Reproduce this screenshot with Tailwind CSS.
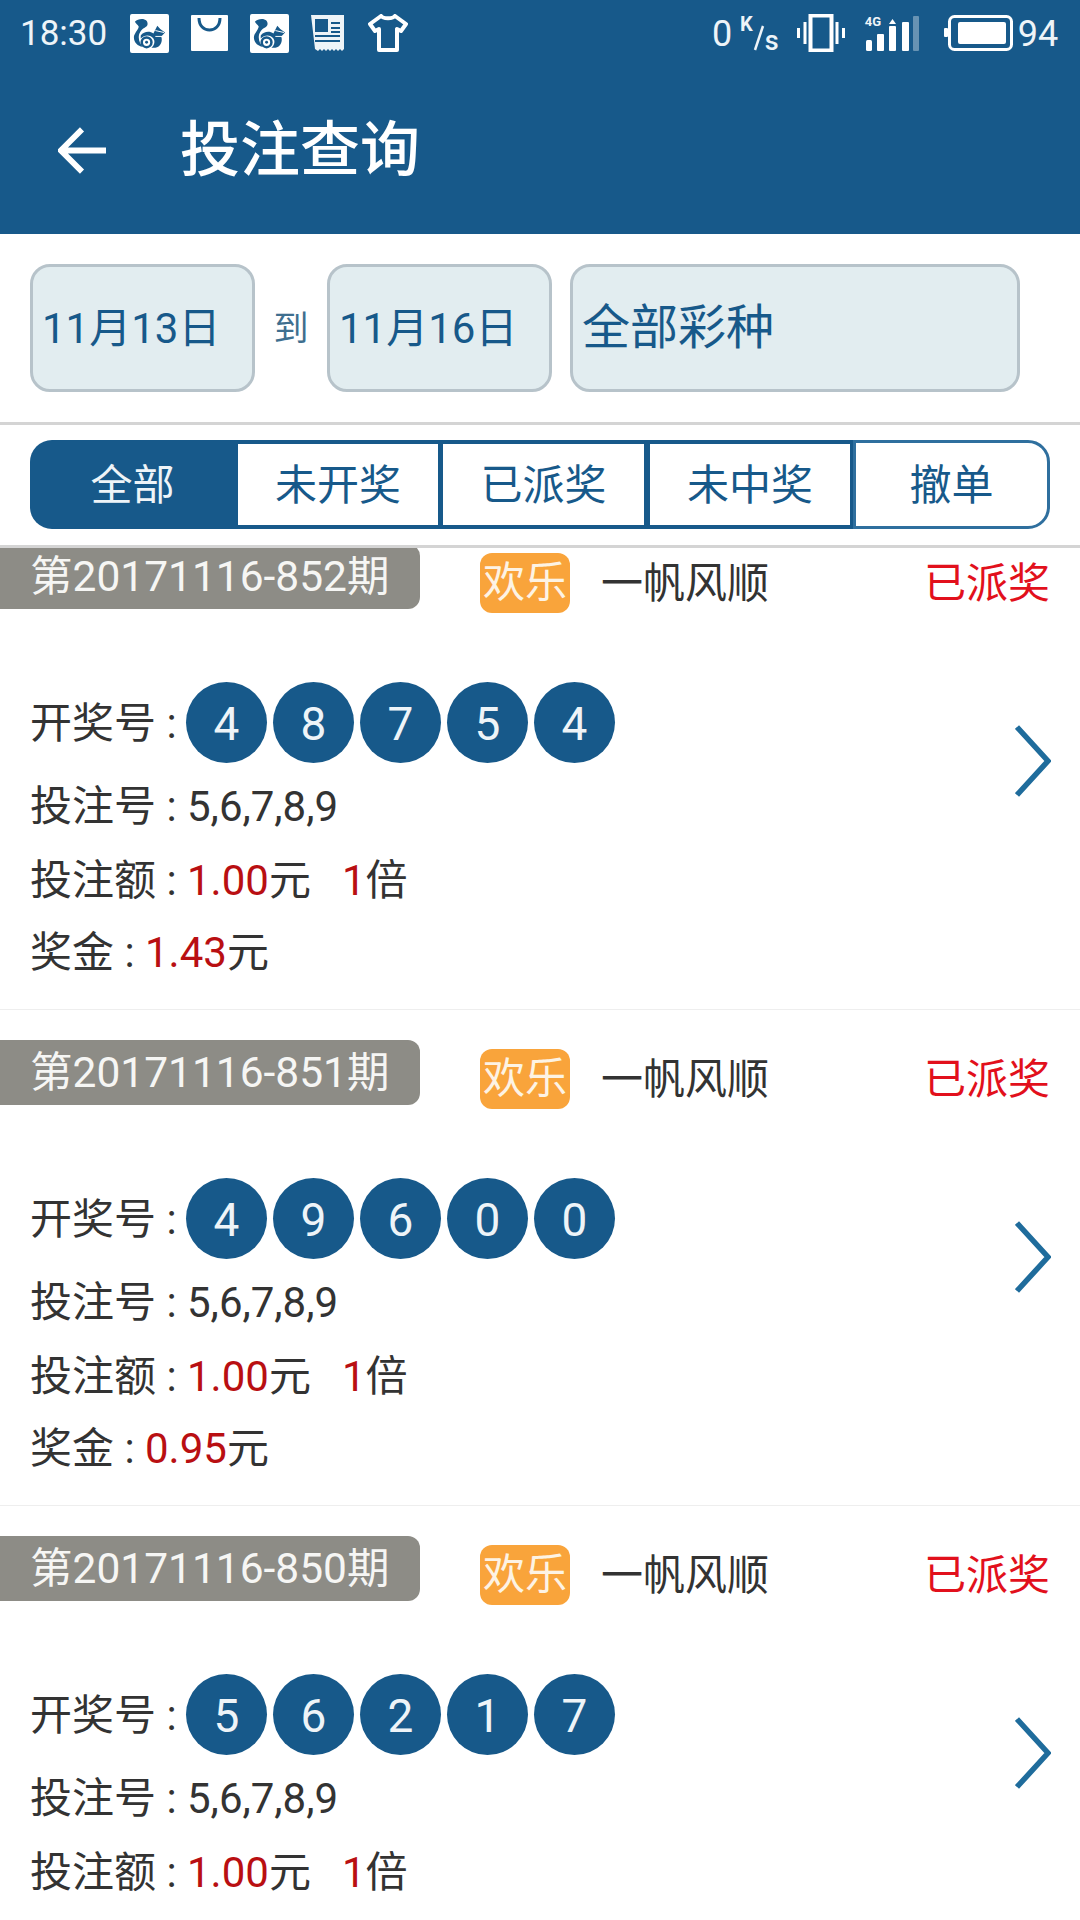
<!DOCTYPE html>
<html lang="zh-CN">
<head>
<meta charset="utf-8">
<script src="https://cdn.jsdelivr.net/npm/@tailwindcss/browser@4"></script>
</head>
<body class="font-['Roboto','Noto_Sans_CJK_SC',sans-serif] bg-white">
<svg width="0" height="0" class="absolute">
  <symbol id="sq" viewBox="0 0 40 40">
    <rect width="40" height="40" rx="2" fill="#fff"/>
    <path d="M5 8C8 5 14 4 17 7C19 10 18 13 15 14C11 16 9 20 9 24C9 28 11 31 13 33.500C8 33 4 29 4 24C4 20 8 17 9 13C8 11 6 10 5 8z" fill="#17598a"/>
    <path d="M11 22C14 18 20 17 24 20L28 12L31 15.500L36 19L32 23C34 28 31 34 26 34.500L22 34.500C25 32 26 28 24 25C21 21 15 21 11 25z" fill="#17598a"/>
    <circle cx="17" cy="29" r="5" fill="none" stroke="#17598a" stroke-width="2.600"/>
    <circle cx="17" cy="29" r="1.500" fill="#17598a"/>
    <path d="M26 17L35 19M26 23L33 23" stroke="#fff" stroke-width="1"/>
  </symbol>
  <symbol id="chev" viewBox="0 0 36 72">
    <path d="M2 2L33 36L2 70" fill="none" stroke="#1f6c9c" stroke-width="5.500"/>
  </symbol>
</svg>
<div class="w-[1080px] h-[1920px] overflow-hidden flex flex-col bg-white">

  <!-- status bar -->
  <div class="h-[68px] bg-[#17598a] flex items-center text-[#eef4f8] relative shrink-0">
    <span class="ml-[20px] w-[110px] text-[35px] leading-none mt-[-1px]">18:30</span>
    <svg class="w-[39px] h-[39px] mt-[-2px]"><use href="#sq"/></svg>
    <svg class="ml-[22px] w-[37px] h-[36px] mt-[-2px]" viewBox="0 0 37 36"><path d="M1 0h35a1 1 0 011 1v34a1 1 0 01-1 1H1a1 1 0 01-1-1V1a1 1 0 011-1z" fill="#fff"/><path d="M8 3c0 8 5 12 10.500 12S29 11 29 3" fill="none" stroke="#17598a" stroke-width="3"/></svg>
    <svg class="ml-[22px] w-[39px] h-[39px] mt-[-2px]"><use href="#sq"/></svg>
    <svg class="ml-[22px] w-[33px] h-[37px] mt-[-2px]" viewBox="0 0 33 37"><path d="M0 0h33v34l-2 2-2-2-2 2-2-2-2 2-2-2-2 2-2-2-2 2-2-2-2 2-2-2-2 2-3-2z" fill="#eef4f8"/><rect x="4" y="4" width="13" height="13" fill="#17598a"/><path d="M20 8h9M20 13h9M20 17h9M4 21h25M4 26h25" stroke="#17598a" stroke-width="2.200"/></svg>
    <svg class="ml-[24px] w-[40px] h-[38px] mt-[-2px]" viewBox="0 0 40 38"><path d="M13 2c2 3 12 3 14 0l11 8-5 7-4-2v21H11V15l-4 2-5-7z" fill="none" stroke="#fff" stroke-width="4" stroke-linejoin="round"/></svg>

    <span class="ml-[304px] text-[36px] leading-none w-[28px] mt-[-1px]">0</span>
    <span class="text-[20px] font-bold leading-none mt-[-20px]">K</span>
    <svg class="w-[12px] h-[30px] mt-[8px]" viewBox="0 0 12 30"><path d="M10 3L2 27" stroke="#eef4f8" stroke-width="2.500"/></svg>
    <span class="text-[27px] font-medium leading-none mt-[15px] w-[20px]">s</span>
    <svg class="ml-[12px] w-[48px] h-[38px] mt-[-2px]" viewBox="0 0 48 38"><rect x="13.500" y="1.500" width="21" height="35" fill="none" stroke="#fff" stroke-width="4"/><path d="M8 8v22M40 8v22" stroke="#fff" stroke-width="3"/><path d="M1.500 14v10M46.500 14v10" stroke="#fff" stroke-width="3"/></svg>
    <div class="ml-[20px] relative w-[56px] h-[38px] mt-[-2px]">
      <span class="absolute left-0 top-[1px] text-[13px] font-bold leading-none">4G</span>
      <svg class="absolute inset-0" width="56" height="38" viewBox="0 0 56 38">
        <rect x="1" y="26" width="6" height="11" rx="1.500" fill="#fff"/>
        <rect x="12" y="20" width="7" height="17" rx="1" fill="#fff"/>
        <rect x="24" y="12" width="7" height="25" rx="1" fill="#fff"/>
        <path d="M24 10l3.500-5 3.500 5z" fill="#fff"/>
        <rect x="37" y="8" width="7" height="29" rx="1" fill="#fff"/>
        <rect x="48" y="2" width="6" height="35" rx="1" fill="#fff" fill-opacity=".35"/>
      </svg>
    </div>
    <svg class="ml-[23px] w-[70px] h-[36px] mt-[-2px]" viewBox="0 0 70 36"><rect x="0" y="13" width="4" height="9" rx="1" fill="#fff"/><rect x="5.500" y="1.500" width="62" height="33" rx="5" fill="none" stroke="#fff" stroke-width="3"/><rect x="14" y="7" width="48" height="22" rx="2" fill="#fff"/></svg>
    <span class="ml-[4px] text-[36px] leading-none mt-[-1px]">94</span>
  </div>

  <!-- toolbar -->
  <div class="h-[166px] bg-[#17598a] flex items-center shrink-0">
    <svg class="ml-[58px] w-[48px] h-[47px] mt-[-1px]" viewBox="0 0 50 48"><path d="M25 2L3 24l22 22M3 24h47" fill="none" stroke="#fff" stroke-width="6"/></svg>
    <span class="ml-[74px] text-[60px] font-medium leading-none text-white mt-[-1px]">投注查询</span>
  </div>

  <!-- filters -->
  <div class="h-[188px] flex items-center px-[30px] shrink-0">
    <div class="w-[225px] h-[128px] flex items-center pl-[9px] pt-[2px] rounded-[20px] border-[3px] border-[#b7c3ca] bg-[#e2edf0] text-[#17598a] text-[42px] leading-none">11月13日</div>
    <div class="w-[72px] pt-[2px] text-center text-[35px] text-[#3f6f8f] leading-none">到</div>
    <div class="w-[225px] h-[128px] flex items-center pl-[9px] pt-[2px] rounded-[20px] border-[3px] border-[#b7c3ca] bg-[#e2edf0] text-[#17598a] text-[42px] leading-none">11月16日</div>
    <div class="ml-[18px] w-[450px] h-[128px] flex items-center pl-[9px] rounded-[20px] border-[3px] border-[#b7c3ca] bg-[#e2edf0] text-[#17598a] text-[48px] leading-none">全部彩种</div>
  </div>
  <div class="h-[3px] bg-[#d4d4d4] shrink-0"></div>

  <!-- tabs -->
  <div class="mx-[30px] mt-[15px] h-[89px] flex text-[42px] leading-none text-[#17598a] shrink-0">
    <div class="w-[205px] pt-[2px] flex items-center justify-center rounded-l-[22px] bg-[#17598a] text-[#eef4f8]">全部</div>
    <div class="w-[206px] pt-[2px] flex items-center justify-center border-y-[4px] border-l-[3px] border-r-[3px] border-[#17598a]">未开奖</div>
    <div class="w-[206px] pt-[2px] flex items-center justify-center border-y-[4px] border-r-[3px] border-l-[2px] border-[#17598a]">已派奖</div>
    <div class="w-[206px] pt-[2px] flex items-center justify-center border-y-[4px] border-x-[3px] border-[#17598a]">未中奖</div>
    <div class="w-[197px] pt-[2px] flex items-center justify-center border-[3px] border-[#2f6f9e] rounded-r-[22px]">撤单</div>
  </div>
  <div class="h-[3px] bg-[#d4d4d4] mt-[16px] shrink-0"></div>

  <!-- list -->
  <div class="flex-1 overflow-hidden text-[#333] text-[42px] leading-none">

    <div class="h-[496px] mt-[-34px] border-b border-[#eeeeee] pt-[30px]">
      <div class="h-[65px] flex">
        <div class="w-[420px] h-[65px] pt-[2px] rounded-r-[12px] bg-[#8d8c86] text-[#f6f6f4] text-[42.500px] flex items-center pl-[30px]">第20171116-852期</div>
        <div class="ml-[60px] mt-[9px] w-[90px] h-[60px] rounded-[12px] bg-[#f9a43b] text-[#fdf3e4] flex items-center justify-center">欢乐</div>
        <div class="ml-[31px] mt-[9px] pt-[2px] h-[60px] flex items-center">一帆风顺</div>
        <div class="ml-[155px] mt-[9px] pt-[2px] h-[60px] flex items-center text-[#e2101c]">已派奖</div>
      </div>
      <div class="mt-[73px] pl-[30px] pr-[29px] flex justify-between">
        <div>
          <div class="h-[81px] flex items-center">
            <span class="w-[156px] pt-[3px]">开奖号 :</span>
            <div class="flex gap-[6px] text-[46px] text-[#eef4f8]">
              <span class="w-[81px] h-[81px] pt-[2px] rounded-full bg-[#17598a] flex items-center justify-center">4</span>
              <span class="w-[81px] h-[81px] pt-[2px] rounded-full bg-[#17598a] flex items-center justify-center">8</span>
              <span class="w-[81px] h-[81px] pt-[2px] rounded-full bg-[#17598a] flex items-center justify-center">7</span>
              <span class="w-[81px] h-[81px] pt-[2px] rounded-full bg-[#17598a] flex items-center justify-center">5</span>
              <span class="w-[81px] h-[81px] pt-[2px] rounded-full bg-[#17598a] flex items-center justify-center">4</span>
            </div>
          </div>
          <div class="mt-[7px] h-[73px] flex items-center">投注号 : 5,6,7,8,9</div>
          <div class="h-[73px] pt-[2px] flex items-center whitespace-pre">投注额 : <span class="text-[#b90f12]">1.00</span>元<span class="ml-[31px] text-[#b90f12]">1</span>倍</div>
          <div class="h-[73px] flex items-center whitespace-pre">奖金 : <span class="text-[#b90f12]">1.43</span>元</div>
        </div>
        <svg class="mt-[43px] w-[36px] h-[72px]"><use href="#chev"/></svg>
      </div>
    </div>

    <div class="h-[496px] border-b border-[#eeeeee] pt-[30px]">
      <div class="h-[65px] flex">
        <div class="w-[420px] h-[65px] pt-[2px] rounded-r-[12px] bg-[#8d8c86] text-[#f6f6f4] text-[42.500px] flex items-center pl-[30px]">第20171116-851期</div>
        <div class="ml-[60px] mt-[9px] w-[90px] h-[60px] rounded-[12px] bg-[#f9a43b] text-[#fdf3e4] flex items-center justify-center">欢乐</div>
        <div class="ml-[31px] mt-[9px] pt-[2px] h-[60px] flex items-center">一帆风顺</div>
        <div class="ml-[155px] mt-[9px] pt-[2px] h-[60px] flex items-center text-[#e2101c]">已派奖</div>
      </div>
      <div class="mt-[73px] pl-[30px] pr-[29px] flex justify-between">
        <div>
          <div class="h-[81px] flex items-center">
            <span class="w-[156px] pt-[3px]">开奖号 :</span>
            <div class="flex gap-[6px] text-[46px] text-[#eef4f8]">
              <span class="w-[81px] h-[81px] pt-[2px] rounded-full bg-[#17598a] flex items-center justify-center">4</span>
              <span class="w-[81px] h-[81px] pt-[2px] rounded-full bg-[#17598a] flex items-center justify-center">9</span>
              <span class="w-[81px] h-[81px] pt-[2px] rounded-full bg-[#17598a] flex items-center justify-center">6</span>
              <span class="w-[81px] h-[81px] pt-[2px] rounded-full bg-[#17598a] flex items-center justify-center">0</span>
              <span class="w-[81px] h-[81px] pt-[2px] rounded-full bg-[#17598a] flex items-center justify-center">0</span>
            </div>
          </div>
          <div class="mt-[7px] h-[73px] flex items-center">投注号 : 5,6,7,8,9</div>
          <div class="h-[73px] pt-[2px] flex items-center whitespace-pre">投注额 : <span class="text-[#b90f12]">1.00</span>元<span class="ml-[31px] text-[#b90f12]">1</span>倍</div>
          <div class="h-[73px] flex items-center whitespace-pre">奖金 : <span class="text-[#b90f12]">0.95</span>元</div>
        </div>
        <svg class="mt-[43px] w-[36px] h-[72px]"><use href="#chev"/></svg>
      </div>
    </div>

    <div class="h-[496px] border-b border-[#eeeeee] pt-[30px]">
      <div class="h-[65px] flex">
        <div class="w-[420px] h-[65px] pt-[2px] rounded-r-[12px] bg-[#8d8c86] text-[#f6f6f4] text-[42.500px] flex items-center pl-[30px]">第20171116-850期</div>
        <div class="ml-[60px] mt-[9px] w-[90px] h-[60px] rounded-[12px] bg-[#f9a43b] text-[#fdf3e4] flex items-center justify-center">欢乐</div>
        <div class="ml-[31px] mt-[9px] pt-[2px] h-[60px] flex items-center">一帆风顺</div>
        <div class="ml-[155px] mt-[9px] pt-[2px] h-[60px] flex items-center text-[#e2101c]">已派奖</div>
      </div>
      <div class="mt-[73px] pl-[30px] pr-[29px] flex justify-between">
        <div>
          <div class="h-[81px] flex items-center">
            <span class="w-[156px] pt-[3px]">开奖号 :</span>
            <div class="flex gap-[6px] text-[46px] text-[#eef4f8]">
              <span class="w-[81px] h-[81px] pt-[2px] rounded-full bg-[#17598a] flex items-center justify-center">5</span>
              <span class="w-[81px] h-[81px] pt-[2px] rounded-full bg-[#17598a] flex items-center justify-center">6</span>
              <span class="w-[81px] h-[81px] pt-[2px] rounded-full bg-[#17598a] flex items-center justify-center">2</span>
              <span class="w-[81px] h-[81px] pt-[2px] rounded-full bg-[#17598a] flex items-center justify-center">1</span>
              <span class="w-[81px] h-[81px] pt-[2px] rounded-full bg-[#17598a] flex items-center justify-center">7</span>
            </div>
          </div>
          <div class="mt-[7px] h-[73px] flex items-center">投注号 : 5,6,7,8,9</div>
          <div class="h-[73px] pt-[2px] flex items-center whitespace-pre">投注额 : <span class="text-[#b90f12]">1.00</span>元<span class="ml-[31px] text-[#b90f12]">1</span>倍</div>
        </div>
        <svg class="mt-[43px] w-[36px] h-[72px]"><use href="#chev"/></svg>
      </div>
    </div>

  </div>
</div>
</body>
</html>
